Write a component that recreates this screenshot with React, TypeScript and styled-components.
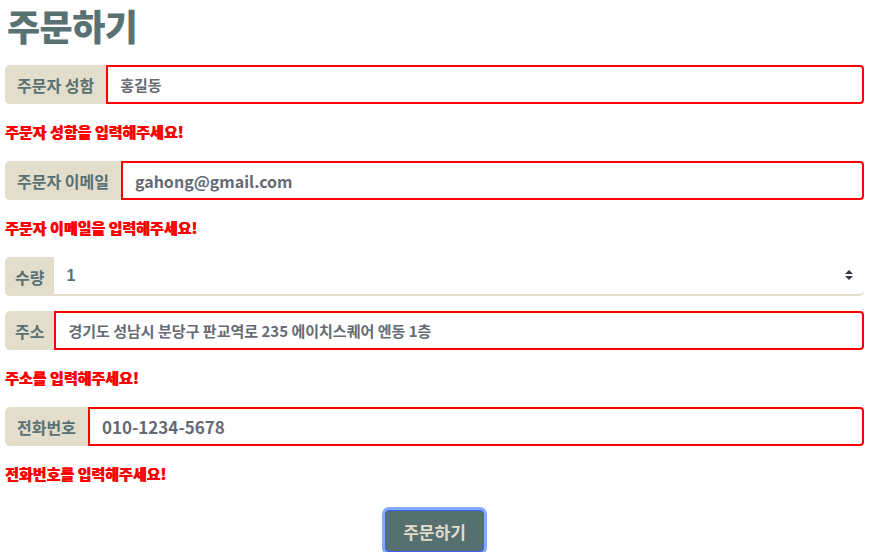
import React from 'react';
import styled, { createGlobalStyle } from 'styled-components';

const GlobalStyle = createGlobalStyle`
  body {
    margin: 0;
    background: #ffffff;
    font-family: "Noto Sans CJK KR", "Noto Sans", sans-serif;
  }
`;

const Page = styled.form`
  padding: 0 9px 0 5px;
  display: flex;
  flex-direction: column;
`;

const Title = styled.h1`
  margin: 2px 0 17px 2px;
  height: 46px;
  font-size: 36px;
  line-height: 46px;
  font-weight: 900;
  color: #587172;
  letter-spacing: -0.5px;
`;

const Field = styled.div<{ $hasError?: boolean }>`
  display: flex;
  flex-direction: column;
  margin-bottom: ${(p) => (p.$hasError ? '0' : '15px')};
`;

const Group = styled.div`
  display: flex;
  height: 39px;
`;

const Label = styled.span<{ $tight?: boolean }>`
  display: flex;
  align-items: center;
  padding: 0 ${(p) => (p.$tight ? '10px' : '12px')};
  background: #e3ddcc;
  color: #587172;
  font-size: 16px;
  font-weight: 700;
  border-radius: 5px 0 0 5px;
  white-space: nowrap;
`;

const Input = styled.input<{ $size?: number }>`
  flex: 1;
  min-width: 0;
  box-sizing: border-box;
  height: 39px;
  padding: 0 12px;
  border: 2px solid #ff0000;
  border-radius: 0 4px 4px 0;
  outline: none;
  color: #656a74;
  font-family: "Noto Sans CJK KR", "Liberation Sans", sans-serif;
  font-size: ${(p) => p.$size ?? 16}px;
  font-weight: 700;
  background: #fff;
`;

const SelectWrap = styled.div`
  flex: 1;
  position: relative;
  display: flex;
`;

const Select = styled.select`
  flex: 1;
  appearance: none;
  height: 39px;
  padding: 0 12px;
  border: none;
  border-bottom: 2px solid #e3ddcc;
  border-radius: 0 0 5px 0;
  background: #fff;
  color: #587172;
  font-family: "Liberation Sans", sans-serif;
  font-size: 16px;
  font-weight: 700;
  outline: none;
`;

const Arrow = styled.svg`
  position: absolute;
  right: 10px;
  top: 12px;
  pointer-events: none;
`;

const ErrorText = styled.p`
  margin: 17px 0 19px;
  height: 21px;
  line-height: 21px;
  color: #ff0000;
  font-size: 15px;
  font-weight: 900;
  text-shadow: 0.5px 0 0 #ff0000;
  white-space: nowrap;
`;

const Submit = styled.button`
  align-self: center;
  margin-top: 7px;
  width: 99px;
  height: 42px;
  border: 1px solid #3f5cf0;
  border-radius: 4px;
  background: #566f6f;
  color: #e3ddcc;
  font-family: "Noto Sans CJK KR", sans-serif;
  font-size: 17px;
  font-weight: 700;
  box-shadow: 0 0 0 3px #82aafe;
`;

type FieldDef = {
  label: string;
  value: string;
  error?: string;
  size?: number;
  type?: string;
  tight?: boolean;
};

const fields: FieldDef[] = [
  { label: '주문자 성함', value: '홍길동', error: '주문자 성함을 입력해주세요!', size: 15 },
  { label: '주문자 이메일', value: 'gahong@gmail.com', error: '주문자 이메일을 입력해주세요!', size: 16, type: 'email' },
];

const fieldsAfter: FieldDef[] = [
  { label: '주소', value: '경기도 성남시 분당구 판교역로 235 에이치스퀘어 엔동 1층', error: '주소를 입력해주세요!', size: 15, tight: true },
  { label: '전화번호', value: '010-1234-5678', error: '전화번호를 입력해주세요!', size: 17 },
];

function TextField({ f }: { f: FieldDef }) {
  return (
    <Field $hasError={!!f.error}>
      <Group>
        <Label $tight={f.tight}>{f.label}</Label>
        <Input type={f.type ?? 'text'} defaultValue={f.value} $size={f.size} />
      </Group>
      {f.error && <ErrorText>{f.error}</ErrorText>}
    </Field>
  );
}

export default function App() {
  return (
    <>
      <GlobalStyle />
      <Page onSubmit={(e) => e.preventDefault()}>
        <Title>주문하기</Title>
        {fields.map((f) => (
          <TextField key={f.label} f={f} />
        ))}
        <Field>
          <Group>
            <Label $tight>수량</Label>
            <SelectWrap>
              <Select defaultValue="1">
                {[1, 2, 3, 4, 5].map((n) => (
                  <option key={n} value={n}>
                    {n}
                  </option>
                ))}
              </Select>
              <Arrow width="10" height="12" viewBox="0 0 10 12">
                <path d="M1 5 L5 1 L9 5 Z M1 7 L5 11 L9 7 Z" fill="#343a40" />
              </Arrow>
            </SelectWrap>
          </Group>
        </Field>
        {fieldsAfter.map((f) => (
          <TextField key={f.label} f={f} />
        ))}
        <Submit type="submit">주문하기</Submit>
      </Page>
    </>
  );
}
